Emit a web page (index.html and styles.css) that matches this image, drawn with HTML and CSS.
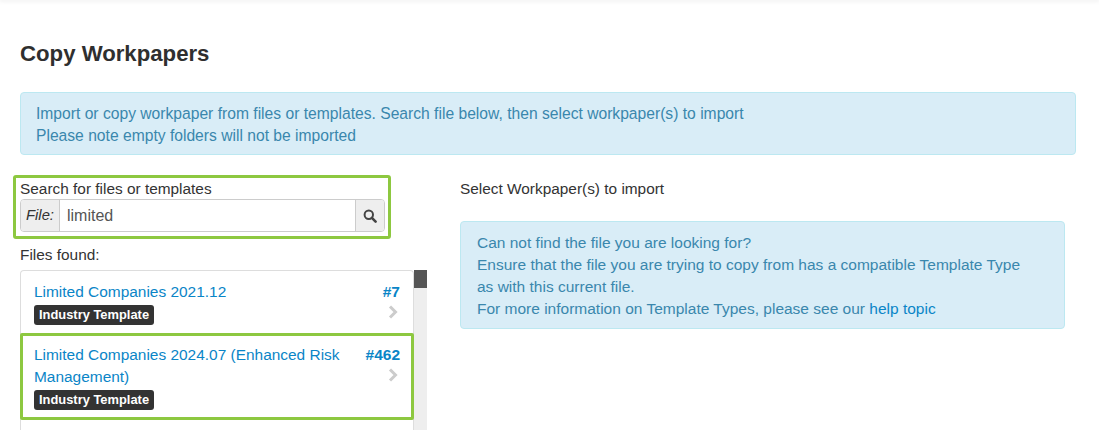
FILE: index.html
```html
<!DOCTYPE html>
<html lang="en">
<head>
<meta charset="utf-8">
<title>Copy Workpapers</title>
<link rel="stylesheet" href="styles.css">
</head>
<body>
<div class="topbar"></div>
<main class="page">
  <h1 class="title">Copy Workpapers</h1>
  <div class="alert alert-top">
    Import or copy workpaper from files or templates. Search file below, then select workpaper(s) to import<br>
    Please note empty folders will not be imported
  </div>
  <div class="columns">
    <section class="left">
      <div class="search-highlight">
        <label class="label">Search for files or templates</label>
        <div class="input-group">
          <span class="addon">File:</span>
          <span class="input">limited</span>
          <button class="search-btn" aria-label="Search">
            <svg width="14" height="14" viewBox="0 0 14 14"><circle cx="5.8" cy="5.8" r="4.2" fill="none" stroke="#444" stroke-width="2"/><path d="M8.9 8.9L12.6 12.6" stroke="#444" stroke-width="2.6" stroke-linecap="round"/></svg>
          </button>
        </div>
      </div>
      <div class="found-label">Files found:</div>
      <div class="list-wrap">
        <div class="list">
          <div class="item">
            <div class="item-main">
              <a class="item-link">Limited Companies 2021.12</a>
              <span class="badge">Industry Template</span>
            </div>
            <div class="item-side">
              <a class="item-num">#7</a>
              <svg class="chev" width="10" height="14" viewBox="0 0 10 14"><path d="M2 1.5L7.5 7L2 12.5" fill="none" stroke="#ccc" stroke-width="3"/></svg>
            </div>
          </div>
          <div class="item item-selected">
            <div class="item-main">
              <a class="item-link">Limited Companies 2024.07 (Enhanced Risk Management)</a>
              <span class="badge">Industry Template</span>
            </div>
            <div class="item-side">
              <a class="item-num">#462</a>
              <svg class="chev" width="10" height="14" viewBox="0 0 10 14"><path d="M2 1.5L7.5 7L2 12.5" fill="none" stroke="#ccc" stroke-width="3"/></svg>
            </div>
          </div>
        </div>
        <div class="scrollbar"><div class="thumb"></div></div>
      </div>
    </section>
    <section class="right">
      <div class="label right-label">Select Workpaper(s) to import</div>
      <div class="alert alert-side">
        Can not find the file you are looking for?<br>
        Ensure that the file you are trying to copy from has a compatible Template Type<br>
        as with this current file.<br>
        For more information on Template Types, please see our <a class="help">help topic</a>
      </div>
    </section>
  </div>
</main>
</body>
</html>
```
FILE: styles.css
```css
* { box-sizing: border-box; }
html, body { margin: 0; height: 430px; overflow: hidden; background: #fff; }
body { font-family: "Liberation Sans", Arial, sans-serif; font-size: 15.4px; line-height: 22px; color: #333; }
.topbar { height: 0; box-shadow: 0 0 4px 1px rgba(0,0,0,.1); }
.page { padding: 0 23px 0 20px; }
.title { margin: 0; padding-top: 40px; font-size: 22.2px; line-height: 28px; font-weight: 700; color: #2f2f2f; }
.alert { background: #d9edf7; border: 1px solid #bce8f1; border-radius: 4px; color: #3a87ad; font-size: 15.5px; }
.alert-top { margin-top: 24px; padding: 10px 15px 8px; height: 63px; font-size: 15.65px; }
.columns { display: flex; margin-top: 20px; }
.left { width: 407px; flex: none; }
.right { width: 605px; margin-left: 33px; flex: none; }
.search-highlight { margin-left: -7px; width: 378px; height: 64px; border: 3px solid #8dc840; border-radius: 3px; padding: 0 3px 0 4px; }
.label { display: block; color: #333; line-height: 21px; }
.input-group { display: flex; height: 33px; border: 1px solid #ccc; border-radius: 4px; overflow: hidden; }
.addon { width: 39px; flex: none; background: #eee; border-right: 1px solid #ccc; font-style: italic; font-size: 14.8px; text-align: center; line-height: 31px; }
.input { flex: 1; padding-left: 7px; line-height: 31px; color: #555; background: #fff; font-size: 16px; }
.search-btn { width: 29px; flex: none; background: #eee; border: 0; border-left: 1px solid #ccc; padding: 0; display: flex; align-items: center; justify-content: center; }
.found-label { margin-top: 5px; line-height: 22px; }
.list-wrap { display: flex; margin-top: 4px; height: 160px; }
.list { width: 394px; flex: none; border: 1px solid #ddd; border-bottom: 0; border-radius: 4px 4px 0 0; }
.scrollbar { width: 13px; flex: none; background: #eee; }
.thumb { height: 18px; background: #555; }
.item { display: flex; padding: 10px 13px 0; height: 62px; }
.item-main { flex: 1; min-width: 0; }
.item-link { display: block; color: #0a85c7; padding-right: 20px; font-size: 15.45px; }
.item-side { flex: none; display: flex; flex-direction: column; align-items: flex-end; }
.item-num { color: #0a85c7; font-weight: 700; font-size: 15.5px; }
.chev { margin: 2px 2px 0 0; display: block; }
.badge { display: inline-block; margin-top: 2px; height: 20px; padding: 0 5px; background: #333; border-radius: 3px; color: #fff; font-size: 12.9px; font-weight: 700; line-height: 20px; }
.item-selected { margin: 0 -1px; height: 87px; border: 3px solid #8dc840; border-radius: 2px; padding: 8px 11px 0 11px; }
.right-label { padding-top: 3px; line-height: 21px; }
.alert-side { margin-top: 22px; padding: 10px 16px; height: 108px; }
.help { color: #0a85c7; }
```
